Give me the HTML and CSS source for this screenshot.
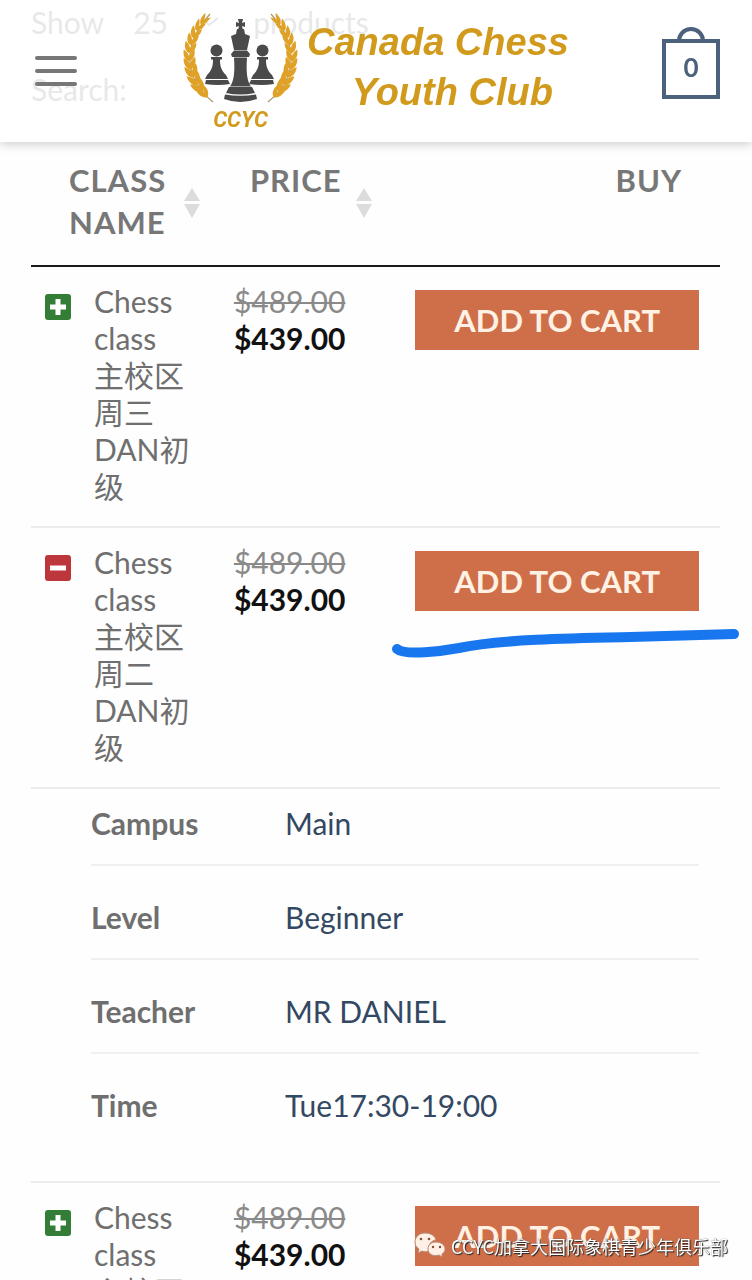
FILE: index.html
```html
<!DOCTYPE html>
<html lang="en">
<head>
<meta charset="utf-8">
<meta name="viewport" content="width=device-width, initial-scale=1">
<title>Canada Chess Youth Club</title>
<link rel="stylesheet" href="styles.css">
</head>
<body>
<header class="site-header">
  <button class="menu" type="button" aria-label="Menu"><span class="bar"></span><span class="bar"></span><span class="bar"></span></button>
  <a class="logo" href="#home">
    <span class="emblem">
      <svg class="emblem-art" viewBox="180 10 117 94" aria-hidden="true">
        <defs>
          <path id="leaf" d="M0 6C-5 4-7-1-6-7C-3-5-1-3 0 0C1-3 3-5 6-7C7-1 5 4 0 6Z"/>
          <g id="branch">
            <path d="M211 102C186 82 176 50 208 14" fill="none" stroke="#a89668" stroke-width="1.2"/>
            <g fill="#dfa126">
              <use href="#leaf" transform="translate(202 20) rotate(40) scale(.6 .9)"/>
              <use href="#leaf" transform="translate(197 26) rotate(34) scale(.7 .9)"/>
              <use href="#leaf" transform="translate(193 33) rotate(26) scale(.8 .9)"/>
              <use href="#leaf" transform="translate(190 40) rotate(18) scale(.85 .9)"/>
              <use href="#leaf" transform="translate(188 48) rotate(10) scale(.9)"/>
              <use href="#leaf" transform="translate(187 56) rotate(2) scale(.9)"/>
              <use href="#leaf" transform="translate(188 64) rotate(-6) scale(.95)"/>
              <use href="#leaf" transform="translate(190 72) rotate(-16) scale(1)"/>
              <use href="#leaf" transform="translate(193 80) rotate(-26) scale(1)"/>
              <use href="#leaf" transform="translate(197 87) rotate(-34) scale(1)"/>
              <use href="#leaf" transform="translate(202 93) rotate(-40) scale(.8 .9)"/>
            </g>
          </g>
          <g id="pawn">
            <circle cx="214.500" cy="50.500" r="6"/>
            <path d="M209 57H220V59.500H218C218 66 219 70 224 75L226 79H203L205 75C210 70 211 66 211 59.500H209Z"/>
            <path d="M204 80H226L228 84Q216 86 203 84Z"/>
          </g>
        </defs>
        <use href="#branch"/>
        <use href="#branch" transform="translate(477 0) scale(-1 1)"/>
        <g fill="#4b4a4a">
          <use href="#pawn"/>
          <use href="#pawn" transform="translate(475 0) scale(-1 1)"/>
          <path d="M236 19H241L240 23L243 22V27L240 26L241 30H236L237 26L234 27V22L237 23Z"/>
          <path d="M235 29H242L243 34L248 36L245 50H232L229 36L234 34Z"/>
          <path d="M232 50.500H245L248 54L247 57H230L229 54Z"/>
          <path d="M232 57.500H245C244 72 245 81 249 86.500H228C232 81 233 72 232 57.500Z"/>
          <path d="M227 87H250L253 93Q238 96 224 93Z"/>
          <path d="M223 94.500Q238 97 254 94.500L255 99Q238 105 222 99Z"/>
        </g>
      </svg>
      <span class="emblem-name">CCYC</span>
    </span>
    <span class="club"><span>Canada Chess</span><span class="club-second">Youth Club</span></span>
  </a>
  <a class="cart" href="#cart" aria-label="Cart, 0 items">0</a>
</header>

<main class="page">
  <div class="filters">
    <div class="length">
      <label for="count">Show</label>
      <span class="select-box">
        <select id="count" class="count"><option>25</option><option>50</option></select>
        <svg class="caret" viewBox="0 0 16 10" aria-hidden="true"><path d="M1 3L6 8L15 1" fill="none" stroke="currentColor" stroke-width="2"/></svg>
      </span>
      <span>products</span>
    </div>
    <div class="search"><label for="search">Search:</label><input id="search" class="search-input" type="search"></div>
  </div>

  <table class="products">
    <colgroup><col class="col-name"><col class="col-price"><col></colgroup>
    <thead>
      <tr>
        <th class="head-name"><button class="sort" type="button">CLASS NAME</button><svg class="sort-icon" viewBox="0 0 16 30" aria-hidden="true"><path d="M8 0L16 13H0ZM0 16H16L8 30Z"/></svg></th>
        <th class="head-price"><button class="sort" type="button">PRICE</button><svg class="sort-icon" viewBox="0 0 16 30" aria-hidden="true"><path d="M8 0L16 13H0ZM0 16H16L8 30Z"/></svg></th>
        <th class="head-buy">BUY</th>
      </tr>
    </thead>
    <tbody>
      <tr>
        <td><div class="name"><button class="toggle" type="button" aria-label="Show details"><svg viewBox="0 0 26 26"><path d="M13 5V21M5 13H21"/></svg></button><span>Chess class 主校区周三DAN初级</span></div></td>
        <td class="price"><del>$489.00</del><ins>$439.00</ins></td>
        <td class="buy"><button class="add" type="button">ADD TO CART</button></td>
      </tr>
      <tr>
        <td><div class="name"><button class="toggle open" type="button" aria-label="Hide details"><svg viewBox="0 0 26 26"><path d="M5 13H21"/></svg></button><span>Chess class 主校区周二DAN初级</span></div></td>
        <td class="price"><del>$489.00</del><ins>$439.00</ins></td>
        <td class="buy"><button class="add" type="button">ADD TO CART</button>
          <svg class="marker" viewBox="0 0 350 36" aria-hidden="true"><path d="M6 22C14 29 52 24 68 21C110 12 190 11 240 10L343 7"/></svg></td>
      </tr>
      <tr>
        <td class="details-cell" colspan="3">
          <dl class="details">
            <div class="detail"><dt>Campus</dt><dd>Main</dd></div>
            <div class="detail"><dt>Level</dt><dd>Beginner</dd></div>
            <div class="detail"><dt>Teacher</dt><dd>MR DANIEL</dd></div>
            <div class="detail"><dt>Time</dt><dd>Tue17:30-19:00</dd></div>
          </dl>
        </td>
      </tr>
      <tr>
        <td><div class="name"><button class="toggle" type="button" aria-label="Show details"><svg viewBox="0 0 26 26"><path d="M13 5V21M5 13H21"/></svg></button><span>Chess class 主校区</span></div></td>
        <td class="price"><del>$489.00</del><ins>$439.00</ins></td>
        <td class="buy"><button class="add" type="button">ADD TO CART</button></td>
      </tr>
    </tbody>
  </table>
</main>

<div class="watermark">
  <svg class="wechat" viewBox="0 0 32 28" aria-hidden="true">
    <path d="M11 1C5 1 1 5 1 10C1 13 2 15 5 17L4 21L8 19C10 20 13 20 15 19C13 13 18 8 22 8C21 4 17 1 11 1Z"/>
    <path d="M22 10C17 10 14 13 14 17C14 22 19 25 25 23L28 25L28 22C30 21 31 19 31 17C31 13 27 10 22 10Z"/>
    <g class="eyes"><circle cx="7" cy="7" r="1.300"/><circle cx="15" cy="7" r="1.300"/><circle cx="19" cy="15" r="1.200"/><circle cx="26" cy="15" r="1.200"/></g>
  </svg>
  <span>CCYC加拿大国际象棋青少年俱乐部</span>
</div>
</body>
</html>
```

FILE: styles.css
```css
*,
*::before { box-sizing: border-box; }

html {
  height: 100%;
  scrollbar-width: none;
}

body {
  margin: 0;
  height: 100%;
  overflow: hidden auto;
  background: #fefefe;
  color: #6f6f6f;
  font: 30px/37px Lato, "Noto Sans CJK SC", sans-serif;
}

button {
  border: 0;
  margin: 0;
  padding: 0;
  background: none;
  color: inherit;
  font: inherit;
  cursor: pointer;
}

/* Header */
.site-header {
  position: fixed;
  z-index: 2;
  top: 0;
  left: 0;
  right: 0;
  height: 142px;
  padding: 0 32px 0 35px;
  display: grid;
  grid-template-columns: 1fr auto 1fr;
  align-items: center;
  background: rgba(255, 255, 255, .84);
  box-shadow: 0 2px 10px rgba(0, 0, 0, .2);
}

.menu {
  width: 42px;
  height: 30px;
  display: flex;
  flex-direction: column;
  justify-content: space-between;
}

.bar {
  width: 100%;
  height: 4px;
  border-radius: 2px;
  background: #777;
}

.logo {
  display: flex;
  gap: 8px;
  align-items: center;
  padding-right: 4px;
  color: #d19a1c;
  text-decoration: none;
}

.emblem {
  display: flex;
  flex-direction: column;
  align-items: center;
  gap: 3px;
}

.emblem-art {
  width: 117px;
  height: 94px;
}

.emblem-name {
  font: italic 700 22px/26px Roboto, sans-serif;
}

.club {
  display: flex;
  flex-direction: column;
  align-items: flex-end;
  padding-bottom: 8px;
  font: italic 700 38px/50px "Liberation Sans", Arial, sans-serif;
}

.club-second { padding-right: 16px; }

.cart {
  position: relative;
  justify-self: end;
  width: 58px;
  height: 60px;
  margin-bottom: 4px;
  border: 4px solid #4c617c;
  color: #4c617c;
  font-size: 26px;
  font-weight: 700;
  line-height: 48px;
  text-align: center;
  text-decoration: none;
}

.cart::before {
  content: "";
  position: absolute;
  left: 11px;
  bottom: 100%;
  width: 28px;
  height: 16px;
  border: 4px solid #4c617c;
  border-bottom: 0;
  border-radius: 14px 14px 0 0;
}

/* Filters */
.page { padding: 0 32px 0 31px; }

.filters {
  height: 142px;
  padding-top: 3px;
  display: flex;
  flex-direction: column;
  gap: 30px;
}

.length {
  display: flex;
  height: 38px;
  align-items: center;
}

.select-box {
  position: relative;
  width: 120px;
  margin: 0 10px 0 19px;
}

.count {
  appearance: none;
  width: 100%;
  padding: 0 10px;
  border: 0;
  background: transparent;
  color: inherit;
  font: inherit;
}

.caret {
  position: absolute;
  right: 24px;
  top: 13px;
  width: 16px;
  height: 10px;
}

.search { display: flex; }

.search-input {
  flex: 1;
  min-width: 0;
  margin-left: 12px;
  border: 0;
  background: transparent;
  font: inherit;
}

/* Product table */
.products {
  width: 100%;
  table-layout: fixed;
  border-collapse: separate;
  border-spacing: 0;
}

.col-name { width: 28%; }
.col-price { width: 25%; }

th {
  position: relative;
  padding: 17px 38px 22px;
  border-bottom: 2px solid #1a1a1a;
  color: #777;
  font-size: 31px;
  font-weight: 700;
  line-height: 42px;
  letter-spacing: 1px;
  text-align: left;
  vertical-align: top;
}

.head-price { padding-left: 26px; }
.head-buy { text-align: right; }

.sort {
  text-align: left;
  letter-spacing: inherit;
}

.sort-icon {
  position: absolute;
  top: 46px;
  right: 24px;
  width: 16px;
  height: 30px;
  fill: #dcdcdc;
}

td {
  padding: 16px 0 21px;
  border-bottom: 2px solid #ececec;
  vertical-align: top;
}

.name {
  display: flex;
  gap: 23px;
  align-items: flex-start;
  padding: 0 34px 0 14px;
}

.toggle {
  flex: none;
  width: 26px;
  height: 26px;
  margin-top: 11px;
  border-radius: 3px;
  background: #337d36;
}

.toggle.open { background: #bd363c; }

.toggle svg {
  display: block;
  fill: none;
  stroke: #fff;
  stroke-width: 5;
}

.price { padding-left: 10px; }

.price del,
.price ins { display: block; }

.price del {
  color: #8a8a8a;
  text-decoration-thickness: 2px;
}

.price ins {
  color: #111;
  font-weight: 700;
  text-decoration: none;
}

.buy {
  position: relative;
  padding: 23px 21px 20px 0;
  text-align: right;
}

.add {
  height: 60px;
  padding: 0 39px;
  background: #ce6f49;
  color: #fff1e4;
  font-size: 31px;
  font-weight: 700;
  white-space: nowrap;
}

.marker {
  position: absolute;
  top: 99px;
  right: -21px;
  width: 350px;
  height: 36px;
  fill: none;
  stroke: #1877ee;
  stroke-width: 10;
  stroke-linecap: round;
}

.details-cell { padding: 0 21px 33px 60px; }

.details { margin: 0; }

.detail {
  display: flex;
  height: 94px;
  padding-bottom: 18px;
  align-items: flex-end;
  line-height: 46px;
  border-bottom: 2px solid #f0f0f0;
}

.detail:first-child { height: 77px; }

.detail:last-child { border-bottom-color: transparent; }

dt {
  width: 194px;
  font-weight: 700;
}

dd {
  margin: 0;
  color: #334862;
}

/* Watermark */
.watermark {
  position: fixed;
  z-index: 3;
  right: 24px;
  bottom: 20px;
  display: flex;
  align-items: center;
  gap: 5px;
  color: #fff;
  font: 18px/28px "Noto Sans CJK SC", sans-serif;
  text-shadow: 1px 1px 1px #222, 0 0 1px #444;
}

.wechat {
  width: 32px;
  height: 28px;
  fill: #fff0e6;
  stroke: #b98a75;
  stroke-width: 1;
}

.eyes {
  fill: #8a4d35;
  stroke: none;
}
```
